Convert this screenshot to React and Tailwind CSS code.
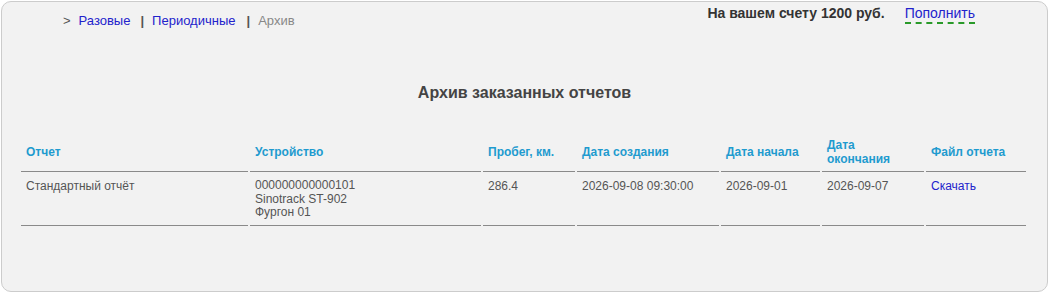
import React from "react";

const cols = [
  { w: "w-[227px]", label: "Отчет" },
  { w: "w-[231px]", label: "Устройство" },
  { w: "w-[92px]", label: "Пробег, км." },
  { w: "w-[142px]", label: "Дата создания" },
  { w: "w-[99px]", label: "Дата начала" },
  { w: "w-[102px]", label: "Дата окончания" },
  { w: "w-[100px]", label: "Файл отчета" },
];

export default function App() {
  return (
    <div className="w-[1050px] h-[293px] bg-white pt-[1px] pl-[1px]" style={{ fontFamily: '"Liberation Sans", Arial, sans-serif' }}>
      <div className="w-[1047px] h-[291px] border border-[#cccccc] rounded-[10px] bg-[#f2f2f2] flex flex-col">
        <div className="flex items-start h-[60px]">
          <div className="ml-[61px] mt-[11px] text-[13px] leading-[16px] text-[#555] flex items-center">
            <span className="text-[#555]">&gt;</span>
            <a className="ml-[8px] text-[#2222cc] cursor-pointer">Разовые</a>
            <span className="ml-[10px] font-bold text-[#555]">|</span>
            <a className="ml-[8px] text-[#2222cc] cursor-pointer">Периодичные</a>
            <span className="ml-[11px] font-bold text-[#555]">|</span>
            <span className="ml-[8px] text-[#888888]">Архив</span>
          </div>
          <div className="ml-auto mr-[72px] mt-[3px] flex items-start text-[14px] leading-[17px]">
            <span className="font-bold text-[#333]">На вашем счету 1200 руб.</span>
            <a className="ml-[20px] text-[#2222cc] border-b-2 border-dashed border-[#2a9a2a] leading-[17px] cursor-pointer">Пополнить</a>
          </div>
        </div>
        <div className="text-center font-bold text-[16px] leading-[20px] text-[#444] mt-[21px]">
          Архив заказанных отчетов
        </div>
        <div className="pl-[17px] mt-[30px]">
          <table className="table-fixed border-separate border-spacing-x-[2px] border-spacing-y-0 text-[12px] leading-[14px]">
            <thead>
              <tr>
                {cols.map((c) => (
                  <th
                    key={c.label}
                    className={`${c.w} h-[38px] px-[5px] py-[5px] text-left align-middle font-bold text-[#1f9bcf] border-b border-[#8a8a8a]`}
                  >
                    {c.label === "Дата окончания" ? (
                      <>
                        Дата
                        <br />
                        окончания
                      </>
                    ) : (
                      c.label
                    )}
                  </th>
                ))}
              </tr>
            </thead>
            <tbody className="text-[#555]">
              <tr>
                <td className="align-top px-[5px] pt-[7px] pb-[5px] border-b border-[#8a8a8a]">Стандартный отчёт</td>
                <td className="align-top px-[5px] pt-[7px] pb-[5px] border-b border-[#8a8a8a] leading-[13.5px]">
                  000000000000101
                  <br />
                  Sinotrack ST-902
                  <br />
                  Фургон 01
                </td>
                <td className="align-top px-[5px] pt-[7px] pb-[5px] border-b border-[#8a8a8a]">286.4</td>
                <td className="align-top px-[5px] pt-[7px] pb-[5px] border-b border-[#8a8a8a]">2026-09-08 09:30:00</td>
                <td className="align-top px-[5px] pt-[7px] pb-[5px] border-b border-[#8a8a8a]">2026-09-01</td>
                <td className="align-top px-[5px] pt-[7px] pb-[5px] border-b border-[#8a8a8a]">2026-09-07</td>
                <td className="align-top px-[5px] pt-[7px] pb-[5px] border-b border-[#8a8a8a]">
                  <a className="text-[#2222cc] cursor-pointer">Скачать</a>
                </td>
              </tr>
            </tbody>
          </table>
        </div>
      </div>
    </div>
  );
}
